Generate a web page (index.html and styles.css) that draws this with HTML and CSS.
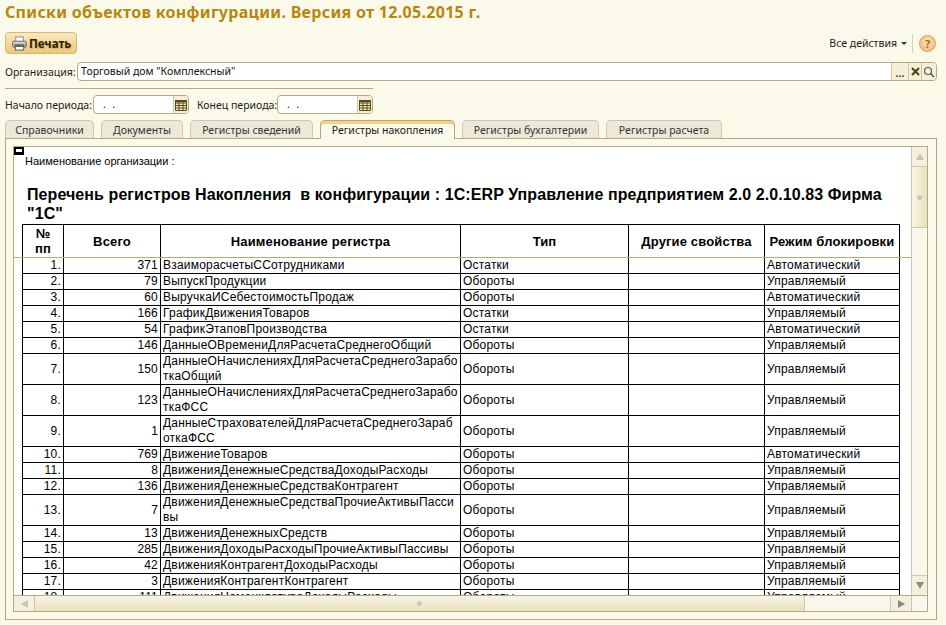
FILE: index.html
```html
<!DOCTYPE html>
<html lang="ru">
<head>
    <meta charset="UTF-8">
    <title>Списки объектов конфигурации</title>
    <link rel="stylesheet" href="styles.css">
</head>
<body>

    <h1 class="title">Списки объектов конфигурации. Версия от 12.05.2015 г.</h1>

    <div class="toolbar">
        <button class="btn-print">
            <svg width="15" height="15" viewBox="0 0 16 15">
                <rect x="4" y="0.5" width="8" height="5" fill="#fff" stroke="#8a8a8a"/>
                <rect x="0.5" y="5" width="15" height="6.5" rx="1.5" fill="#a9a9a6" stroke="#77776f"/>
                <rect x="2" y="6" width="12" height="1.5" fill="#dcdcd8"/>
                <rect x="3.5" y="9" width="9" height="5.5" fill="#fff" stroke="#55554f"/>
                <rect x="4" y="9.5" width="8" height="1.5" fill="#333"/>
            </svg>
            Печать
        </button>
        <div class="all-actions">Все действия <span class="arrow"></span></div>
        <div class="tool-sep"></div>
        <div class="help">?</div>
    </div>

    <div class="org-row">
        <label>Организация:</label>
        <div class="field org-field">
            <span class="field-text">Торговый дом "Комплексный"</span>
            <span class="field-btn btn-dots">...</span>
            <span class="field-btn btn-clear">
                <svg width="9" height="9" viewBox="0 0 9 9"><path d="M1 1L8 8M8 1L1 8" stroke="#4f3f10" stroke-width="2"/></svg>
            </span>
            <span class="field-btn btn-find">
                <svg width="12" height="12" viewBox="0 0 12 12"><circle cx="5" cy="5" r="3.5" fill="none" stroke="#5f5a45" stroke-width="1.2"/><path d="M7.5 7.5L11 11" stroke="#5f5a45" stroke-width="1.6"/></svg>
            </span>
        </div>
    </div>

    <hr class="divider">

    <div class="period-row">
        <label>Начало периода:</label>
        <div class="field date-field">
            <span class="field-text date-text">.&nbsp;&nbsp;.</span>
            <span class="field-btn btn-cal">
                <svg width="12" height="12" viewBox="0 0 12 12"><path d="M.5 1.5H11.5V11.5H.5ZM.5 4H11.5M.5 6.5H11.5M.5 9H11.5M4 1.5V11.5M8 1.5V11.5" fill="#f5eecb" stroke="#5a4a16"/><rect x="0" y="1" width="12" height="2" fill="#5a4a16"/></svg>
            </span>
        </div>
        <label class="label-end">Конец периода:</label>
        <div class="field date-field">
            <span class="field-text date-text">.&nbsp;&nbsp;.</span>
            <span class="field-btn btn-cal">
                <svg width="12" height="12" viewBox="0 0 12 12"><path d="M.5 1.5H11.5V11.5H.5ZM.5 4H11.5M.5 6.5H11.5M.5 9H11.5M4 1.5V11.5M8 1.5V11.5" fill="#f5eecb" stroke="#5a4a16"/><rect x="0" y="1" width="12" height="2" fill="#5a4a16"/></svg>
            </span>
        </div>
    </div>

    <div class="tabs">
        <div class="tab tab-1">Справочники</div>
        <div class="tab tab-2">Документы</div>
        <div class="tab tab-3">Регистры сведений</div>
        <div class="tab tab-4 active">Регистры накопления</div>
        <div class="tab tab-5">Регистры бухгалтерии</div>
        <div class="tab tab-6">Регистры расчета</div>
    </div>

    <div class="panel">
        <div class="frame">
            <div class="sheet">
                <div class="marker"></div>
                <div class="freeze-line"></div>
                <div class="org-name">Наименование организации :</div>
                <h2 class="report-title">Перечень регистров Накопления&nbsp; в конфигурации : 1С:ERP Управление предприятием 2.0 2.0.10.83 Фирма "1С"</h2>
                <table class="reg-table">
                    <thead>
                        <tr>
                            <th class="col-num">№<br>пп</th>
                            <th class="col-total">Всего</th>
                            <th class="col-name">Наименование регистра</th>
                            <th class="col-type">Тип</th>
                            <th class="col-other">Другие свойства</th>
                            <th class="col-lock">Режим блокировки</th>
                        </tr>
                    </thead>
                    <tbody>
                        <tr><td class="num">1.</td><td class="num">371</td><td>ВзаиморасчетыССотрудниками</td><td>Остатки</td><td></td><td>Автоматический</td></tr>
                        <tr><td class="num">2.</td><td class="num">79</td><td>ВыпускПродукции</td><td>Обороты</td><td></td><td>Управляемый</td></tr>
                        <tr><td class="num">3.</td><td class="num">60</td><td>ВыручкаИСебестоимостьПродаж</td><td>Обороты</td><td></td><td>Автоматический</td></tr>
                        <tr><td class="num">4.</td><td class="num">166</td><td>ГрафикДвиженияТоваров</td><td>Остатки</td><td></td><td>Управляемый</td></tr>
                        <tr><td class="num">5.</td><td class="num">54</td><td>ГрафикЭтаповПроизводства</td><td>Остатки</td><td></td><td>Автоматический</td></tr>
                        <tr><td class="num">6.</td><td class="num">146</td><td>ДанныеОВремениДляРасчетаСреднегоОбщий</td><td>Обороты</td><td></td><td>Управляемый</td></tr>
                        <tr><td class="num">7.</td><td class="num">150</td><td>ДанныеОНачисленияхДляРасчетаСреднегоЗаработкаОбщий</td><td>Обороты</td><td></td><td>Управляемый</td></tr>
                        <tr><td class="num">8.</td><td class="num">123</td><td>ДанныеОНачисленияхДляРасчетаСреднегоЗаработкаФСС</td><td>Обороты</td><td></td><td>Управляемый</td></tr>
                        <tr><td class="num">9.</td><td class="num">1</td><td>ДанныеСтрахователейДляРасчетаСреднегоЗаработкаФСС</td><td>Обороты</td><td></td><td>Управляемый</td></tr>
                        <tr><td class="num">10.</td><td class="num">769</td><td>ДвижениеТоваров</td><td>Обороты</td><td></td><td>Автоматический</td></tr>
                        <tr><td class="num">11.</td><td class="num">8</td><td>ДвиженияДенежныеСредстваДоходыРасходы</td><td>Обороты</td><td></td><td>Управляемый</td></tr>
                        <tr><td class="num">12.</td><td class="num">136</td><td>ДвиженияДенежныеСредстваКонтрагент</td><td>Обороты</td><td></td><td>Управляемый</td></tr>
                        <tr><td class="num">13.</td><td class="num">7</td><td>ДвиженияДенежныеСредстваПрочиеАктивыПассивы</td><td>Обороты</td><td></td><td>Управляемый</td></tr>
                        <tr><td class="num">14.</td><td class="num">13</td><td>ДвиженияДенежныхСредств</td><td>Обороты</td><td></td><td>Управляемый</td></tr>
                        <tr><td class="num">15.</td><td class="num">285</td><td>ДвиженияДоходыРасходыПрочиеАктивыПассивы</td><td>Обороты</td><td></td><td>Управляемый</td></tr>
                        <tr><td class="num">16.</td><td class="num">42</td><td>ДвиженияКонтрагентДоходыРасходы</td><td>Обороты</td><td></td><td>Управляемый</td></tr>
                        <tr><td class="num">17.</td><td class="num">3</td><td>ДвиженияКонтрагентКонтрагент</td><td>Обороты</td><td></td><td>Управляемый</td></tr>
                        <tr><td class="num">18.</td><td class="num">111</td><td>ДвиженияНоменклатураДоходыРасходы</td><td>Обороты</td><td></td><td>Управляемый</td></tr>
                    </tbody>
                </table>
            </div>

            <div class="vscroll">
                <div class="sb-btn sb-up"><span class="tri-up"></span></div>
                <div class="sb-vthumb"><span class="grip"></span></div>
                <div class="sb-track"></div>
                <div class="sb-btn sb-down"><span class="tri-down"></span></div>
            </div>

            <div class="hscroll">
                <div class="sb-btn sb-left"><span class="tri-left"></span></div>
                <div class="sb-hthumb"><span class="grip"></span></div>
                <div class="sb-track"></div>
                <div class="sb-btn sb-right"><span class="tri-right"></span></div>
            </div>

            <div class="sb-corner"></div>
        </div>
    </div>

</body>
</html>
```

FILE: styles.css
```css
* {
    margin: 0;
    padding: 0;
    box-sizing: border-box;
}
html, body {
    height: 625px;
    overflow: hidden;
}
body {
    display: flex;
    flex-direction: column;
    padding: 0 9px 5px 5px;
    background-color: #fbf9ea;
    font-family: "Noto Sans", sans-serif;
    font-size: 10.5px;
    color: #1c1c1c;
}
label {
    white-space: nowrap;
}
.title {
    height: 32px;
    padding-top: 2px;
    font-family: "Noto Sans", sans-serif;
    font-size: 16px;
    line-height: 20px;
    letter-spacing: 0.3px;
    font-weight: bold;
    color: #b8860b;
}

/* toolbar */
.toolbar {
    display: flex;
    align-items: center;
    height: 22px;
}
.btn-print {
    display: flex;
    align-items: center;
    gap: 2px;
    width: 72px;
    height: 22px;
    padding-left: 6px;
    border: 1px solid #d8b76e;
    border-radius: 4px;
    background: linear-gradient(#fbe9bd, #ecc87e);
    font-family: "Noto Sans", sans-serif;
    font-size: 11.5px;
    font-weight: bold;
    color: #2a2208;
    text-shadow: 1px 1px 1px rgba(190, 130, 30, 0.5);
}
.all-actions {
    margin-left: auto;
    display: flex;
    align-items: center;
    gap: 4px;
}
.arrow {
    width: 0;
    height: 0;
    border-left: 3px solid transparent;
    border-right: 3px solid transparent;
    border-top: 3px solid #333;
}
.tool-sep {
    width: 1px;
    height: 19px;
    margin: 0 6px 0 5px;
    background-color: #d9d3b0;
}
.help {
    width: 17px;
    height: 17px;
    margin-right: 1px;
    border: 1px solid #d2a05a;
    border-radius: 50%;
    background: radial-gradient(circle at 50% 40%, #fde6b8, #efb25f);
    text-align: center;
    font-size: 11px;
    line-height: 15px;
    font-weight: bold;
    color: #96682a;
}

/* fields */
.org-row, .period-row {
    display: flex;
    align-items: center;
}
.org-row {
    margin-top: 8px;
    height: 19px;
}
.org-row label {
    width: 72px;
}
.field {
    display: flex;
    align-items: stretch;
    height: 19px;
    border: 1px solid #b5aa7c;
    border-radius: 4px;
    background-color: #fff;
    overflow: hidden;
}
.org-field {
    flex: 1;
}
.field-text {
    flex: 1;
    padding-left: 3px;
    line-height: 17px;
    color: #111;
}
.field-btn {
    display: flex;
    align-items: center;
    justify-content: center;
    border-left: 1px solid #cfc8a4;
    background-color: #f3efd9;
}
.btn-dots {
    width: 17px;
    align-items: flex-end;
    line-height: 14px;
    font-weight: bold;
    color: #4f3f10;
}
.btn-clear {
    width: 13px;
}
.btn-find {
    width: 15px;
}
.btn-cal {
    width: 15px;
}
.divider {
    width: 368px;
    height: 1px;
    margin: 7px 0 6px;
    border: none;
    background-color: #b5aa7c;
}
.period-row {
    height: 19px;
}
.period-row label {
    width: 88px;
}
.period-row .label-end {
    width: 80px;
    margin-left: 8px;
}
.date-field {
    width: 96px;
}
.date-text {
    padding-left: 9px;
    letter-spacing: 0.3px;
}

/* tabs */
.tabs {
    display: flex;
    gap: 7px;
    height: 18px;
    margin-top: 6px;
}
.tab {
    height: 18px;
    border: 1px solid #cfc8a4;
    border-bottom: none;
    border-radius: 5px 5px 0 0;
    background-color: #ece9d8;
    text-align: center;
    line-height: 19px;
    color: #333;
}
.tab-1 { width: 89px; }
.tab-2 { width: 82px; }
.tab-3 { width: 123px; }
.tab-4 { width: 135px; }
.tab-5 { width: 137px; }
.tab-6 { width: 116px; }
.tab.active {
    position: relative;
    height: 19px;
    z-index: 1;
    border-color: #b5aa7c;
    box-shadow: inset 0 3px 0 #f8d283;
    background-color: #fbf9ea;
    color: #222;
}

/* report panel */
.panel {
    flex: 1;
    min-height: 0;
    padding: 7px 8px 7px 7px;
    border: 1px solid #b5aa7c;
}
.frame {
    display: grid;
    grid-template-columns: 1fr 16px;
    grid-template-rows: 1fr 16px;
    height: 100%;
    border: 1px solid #b5aa7c;
    background-color: #fff;
}
.sheet {
    position: relative;
    overflow: hidden;
    padding-left: 8px;
    font-family: "Liberation Sans", Arial, sans-serif;
    color: #000;
}
.marker {
    position: absolute;
    top: 0;
    left: 0;
    width: 10px;
    height: 8px;
    border: 2px solid #000;
    border-bottom-width: 3px;
    background-color: #fff;
}
.freeze-line {
    position: absolute;
    top: 110px;
    left: 0;
    right: 0;
    height: 1px;
    z-index: 1;
    background-color: #b5aa7c;
}
.org-name {
    padding: 8px 0 0 3px;
    font-size: 11px;
    line-height: 12px;
}
.report-title {
    width: 868px;
    margin: 18px 0 0 5px;
    font-size: 16px;
    line-height: 19px;
    letter-spacing: 0.08px;
    font-weight: bold;
}
.reg-table {
    width: 877px;
    margin-top: 1px;
    table-layout: fixed;
    border-collapse: collapse;
    font-size: 12px;
    line-height: 15px;
    letter-spacing: 0.2px;
}
.reg-table th, .reg-table td {
    border: 1px solid #000;
    padding: 0 2px;
    overflow-wrap: anywhere;
    vertical-align: middle;
}
.reg-table th {
    height: 33px;
    font-size: 13px;
    font-weight: bold;
    letter-spacing: 0.15px;
    text-align: center;
}
.reg-table td.num {
    text-align: right;
}
.col-num { width: 41px; }
.col-total { width: 97px; }
.col-name { width: 300px; }
.col-type { width: 168px; }
.col-other { width: 136px; }
.col-lock { width: 135px; }

/* scrollbars */
.vscroll, .hscroll {
    display: flex;
    background-color: #f9f7ec;
}
.vscroll {
    flex-direction: column;
    border-left: 1px solid #cfc8a4;
}
.hscroll {
    border-top: 1px solid #b5aa7c;
}
.sb-track {
    flex: 1;
}
.sb-btn {
    display: flex;
    align-items: center;
    justify-content: center;
    background-color: #f3f0df;
}
.sb-up, .sb-down {
    height: 20px;
}
.sb-up {
    border-bottom: 1px solid #cfc8a4;
}
.sb-down {
    border-top: 1px solid #cfc8a4;
}
.sb-left, .sb-right {
    width: 21px;
}
.sb-left {
    border-right: 1px solid #cfc8a4;
}
.sb-right {
    border-left: 1px solid #cfc8a4;
}
.sb-vthumb, .sb-hthumb {
    display: flex;
    align-items: center;
    justify-content: center;
}
.sb-vthumb {
    height: 61px;
    border-bottom: 1px solid #cfc8a4;
    background: linear-gradient(to right, #f8f5e4, #e8e1bd);
}
.sb-hthumb {
    width: 770px;
    border-right: 1px solid #cfc8a4;
    background: linear-gradient(#f8f5e4, #e8e1bd);
}
.grip {
    width: 5px;
    height: 5px;
    border-radius: 50%;
    background-color: #c9c7b8;
}
.tri-up, .tri-down, .tri-left, .tri-right {
    width: 0;
    height: 0;
    border: 4px solid transparent;
}
.tri-up {
    border-top: none;
    border-bottom: 7px solid #c8c6b8;
}
.tri-down {
    border-bottom: none;
    border-top: 7px solid #8d8b7c;
}
.tri-left {
    border-left: none;
    border-right: 7px solid #c8c6b8;
}
.tri-right {
    border-right: none;
    border-left: 7px solid #8d8b7c;
}
.sb-corner {
    border-top: 1px solid #b5aa7c;
    border-left: 1px solid #cfc8a4;
    background-color: #f9f7ec;
}
```
